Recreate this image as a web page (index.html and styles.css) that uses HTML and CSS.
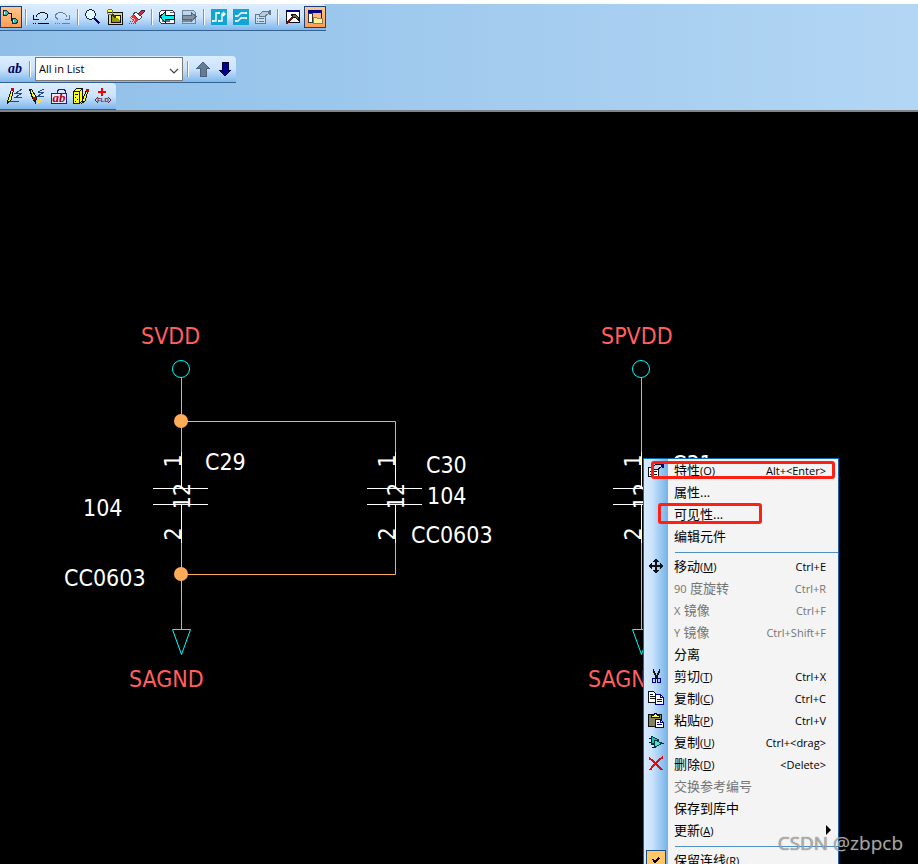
FILE: index.html
```html
<!DOCTYPE html>
<html lang="zh-CN">
<head>
    <meta charset="UTF-8" />
    <meta name="viewport" content="width=device-width, initial-scale=1.0">
    <title>Schematic Editor</title>
    <link rel="stylesheet" href="styles.css">
</head>
<body>
    <header class="toolbars">
        <div class="toolbar toolbar-main">
            <button type="button" class="tool active" aria-label="Add connection">
                <svg viewBox="0 0 16 16"><path d="M5 4.500h3.500v7h3" fill="none" stroke="#000"/><path d="M0 1h3l3 2v2l-3 2H0zM9 9h3l3 2v3l-3 1H9z" fill="#00383c"/><path d="M1 2h2l2 2-2 2H1zM10 10h2l2 2-2 2h-2z" fill="#3cb8b8"/><path d="M1 3h1v2H1zM10 11h1v2h-1z" fill="#fff"/></svg>
            </button>
            <span class="sep"></span>
            <button type="button" class="tool" aria-label="Undo">
                <svg viewBox="0 0 16 16"><path d="M.5 6v4.500h5M2.500 8.500Q5 3.500 9 3.500 15 4 15 7 15 9 12 10.500" fill="none" stroke="#111"/><path d="M0 14h1v1H0zM2 14h1v1H2zM5 14h11v1H5z" fill="#000"/></svg>
            </button>
            <button type="button" class="tool" aria-label="Redo">
                <svg viewBox="0 0 16 16"><path d="M14.500 6v4.500h-5M12.500 8.500Q10 3.500 6 3.500 .5 4 .5 7 .5 9 3 10.500" fill="none" stroke="#64809c"/><path d="M0 14h1v1H0zM2 14h1v1H2zM4 14h1v1H4zM7 14h8v1H7z" fill="#64809c"/></svg>
            </button>
            <span class="sep"></span>
            <button type="button" class="tool" aria-label="Zoom">
                <svg viewBox="0 0 16 16"><circle cx="5.500" cy="5.500" r="4.800" fill="#e4ffff" stroke="#123"/><path d="M3 5q1-2 3-2" fill="none" stroke="#fff"/><path d="M9.500 9.500l5 5" stroke="#000080" stroke-width="2.600"/></svg>
            </button>
            <button type="button" class="tool" aria-label="Board view">
                <svg viewBox="0 0 16 16"><path d="M1 3h15v13H1z" fill="#111"/><path d="M2 4h13v11H2z" fill="#d6d69a"/><path d="M4 6h10v8H4z" fill="#111"/><path d="M5 7h8v6H5z" fill="#98980a"/><path d="M7 7h6v4z" fill="#ffff40"/><path d="M5 5l4 4" stroke="#333" stroke-width="2"/><circle cx="3" cy="3" r="2.800" fill="#ff0" stroke="#775"/><path d="M1 3.500h4" stroke="#222"/></svg>
            </button>
            <button type="button" class="tool" aria-label="Redraw">
                <svg viewBox="0 0 16 16"><path d="M1 8l3-3 6 5-4 5z" fill="#e83440"/><path d="M4 5l3-2 6 5-3 3z" fill="#fff" stroke="#444"/><path d="M2 8l6 5M1 10l5 4" stroke="#ffc0c0" stroke-dasharray="1 1"/><path d="M9 5l4-4h2v2l-4 4" fill="#d03040" stroke="#422"/><path d="M0 14.500h8M1 12.500h5" stroke="#e02030" stroke-dasharray="1 1"/></svg>
            </button>
            <span class="sep"></span>
            <button type="button" class="tool" aria-label="Previous sheet">
                <svg viewBox="0 0 16 16"><path d="M2.500 1.500h11l2 2v11h-13l-2-2v-9z" fill="#fff" stroke="#334"/><path d="M3 13l1-2 1 2 1-2 1 2 1-2 1 2 1-2 1 2M11 3.500h4" stroke="#667" fill="none"/><path d="M1 7.500L6 3v3h9v4H6v3z" fill="#00f0f4" stroke="#012"/></svg>
            </button>
            <button type="button" class="tool" aria-label="Next sheet">
                <svg viewBox="0 0 16 16"><path d="M1.500 1.500h11l2 2v11h-13z" fill="#bdd6ec" stroke="#71869b"/><path d="M2 13l1-2 1 2 1-2 1 2 1-2 1 2 1-2 1 2" stroke="#71869b" fill="none"/><path d="M15 7.500L10 3v3H1v4h9v3z" fill="#8395a4" stroke="#536779"/></svg>
            </button>
            <span class="sep"></span>
            <button type="button" class="tool smooth" aria-label="Route">
                <svg viewBox="0 0 16 16"><path d="M0 0h16v16H0z" fill="#12a5d3"/><path d="M2 12h3V4h3M8 12h3V5h3M12 3l2 2-2 2" fill="none" stroke="#fff" stroke-width="1.400"/><path d="M1 11h2v2H1zM7 3h2v2H7zM7 11h2v2H7z" fill="#fff"/></svg>
            </button>
            <button type="button" class="tool smooth" aria-label="Differential pair">
                <svg viewBox="0 0 16 16"><path d="M0 0h16v16H0z" fill="#12a5d3"/><path d="M2 7h3l3-3h6M2 12h3l3-3h6" fill="none" stroke="#fff" stroke-width="1.400"/><path d="M2 6h2v2H2zM12 3h2v2h-2zM2 11h2v2H2zM12 8h2v2h-2z" fill="#fff"/></svg>
            </button>
            <button type="button" class="tool" aria-label="Properties">
                <svg viewBox="0 0 16 16"><path d="M.5 5.500h10v9H.5z" fill="#c8def2" stroke="#64788c"/><path d="M2 9.500h1M4 9.500h5M2 12.500h1M4 12.500h5" stroke="#64788c"/><path d="M4 6l4-4h5v3l-3 2H7L5 8z" fill="#b7cce0" stroke="#64788c"/><path d="M14 1h2v5h-2z" fill="#64788c"/></svg>
            </button>
            <span class="sep"></span>
            <button type="button" class="tool" aria-label="Tools">
                <svg viewBox="0 0 16 16"><path d="M1.500 1.500h13v12h-13z" fill="#fff" stroke="#111"/><path d="M1 1h14v2H1z" fill="#000080"/><path d="M1 15l8-8" stroke="#611" stroke-width="2"/><path d="M6 5h4l3 3v3l-2-2-3-1z" fill="#696a35" stroke="#111"/></svg>
            </button>
            <button type="button" class="tool active" aria-label="Project explorer">
                <svg viewBox="0 0 16 16"><path d="M1.500 1.500h13v12h-13z" fill="#ffb878" stroke="#000080"/><path d="M1 1h14v3H1z" fill="#000080"/><path d="M1.500 4.500h4v9h-4z" fill="#fff" stroke="#333"/><path d="M6.500 8.500h3l1 1h5v5h-9z" fill="#fff29b" stroke="#967a49"/></svg>
            </button>
        </div>

        <div class="toolbar toolbar-filter">
            <button type="button" class="tool text-tool">ab</button>
            <span class="sep"></span>
            <div class="select-wrap">
                <select id="listFilter" aria-label="Filter">
                    <option>All in List</option>
                </select>
                <svg class="chevron" viewBox="0 0 10 6"><path d="M1 1l4 4 4-4" fill="none" stroke="#444" stroke-width="1.200"/></svg>
            </div>
            <span class="sep"></span>
            <button type="button" class="tool" aria-label="Previous">
                <svg viewBox="0 0 16 16"><path d="M8 1l6 6h-3v8H5V7H2z" fill="#647d93" stroke="#4a6178"/></svg>
            </button>
            <button type="button" class="tool" aria-label="Next">
                <svg viewBox="0 0 16 16"><path d="M8 15L2 9h3V1h6v8h3z" fill="#000090" stroke="#000040"/></svg>
            </button>
        </div>

        <div class="toolbar toolbar-edit">
            <button type="button" class="tool" aria-label="Draw line">
                <svg viewBox="0 0 16 16"><path d="M15 1l-6 4h6l-6 4h6M3 13.500h9" fill="none" stroke="#224a80"/><path d="M.5 15l1-5 3-8h2L4 12z" fill="#ff0" stroke="#111"/><path d="M4 0h3v3H4z" fill="#d00000"/></svg>
            </button>
            <button type="button" class="tool" aria-label="Modify line">
                <svg viewBox="0 0 16 16"><path d="M15 1l-6 3h6l-6 4h6" fill="none" stroke="#224a80"/><path d="M.5 1h2l5 9-1 5-3-5z" fill="#ff0" stroke="#111"/><path d="M4 9h3v3H4z" fill="#d00000"/><path d="M10 11h4l-3 4-4 1z" fill="#ffe020"/></svg>
            </button>
            <button type="button" class="tool" aria-label="Attribute">
                <svg viewBox="0 0 16 16"><path d="M.5 5.500h15v10H.5z" fill="#e4e8ff" stroke="#202070"/><path d="M6.500 5V3l2-2h4l2 2v3" fill="none" stroke="#202070"/><text x="8" y="14" class="icon-ab">ab</text></svg>
            </button>
            <button type="button" class="tool" aria-label="Library">
                <svg viewBox="0 0 16 16"><path d="M.5 3.500l3-3h6v12l-3 3h-6z" fill="#ffff20" stroke="#111"/><path d="M.5 3.500h6v12M6.500 3.500l3-3M2 6.500h3M2 9.500h1M4 11.500h1M2 13.500h1" fill="none" stroke="#111"/><path d="M9 15l1-4 3-8h2l-3 10z" fill="#ff0" stroke="#111"/><path d="M13 1h3v3h-3z" fill="#d00000"/></svg>
            </button>
            <button type="button" class="tool" aria-label="Add field">
                <svg viewBox="0 0 16 16"><path d="M7 0v8M3 4h8" stroke="#f00000" stroke-width="2"/><path d="M3 9l-3 3 3 3M13 9l3 3-3 3" fill="none" stroke="#702020"/><text x="8" y="14" class="icon-fld">FLD</text></svg>
            </button>
        </div>
    </header>

    <main class="canvas">
        <svg class="schematic">
            <defs>
                <g id="power">
                    <circle cx="0" cy="257" r="8.500" class="pin" />
                    <path d="M.5 266v12" class="pin" />
                </g>
                <g id="ground">
                    <path d="M.5 493v24M-8.500 517.500h18l-9 25z" class="pin" />
                </g>
                <g id="capacitor">
                    <path d="M.5 340v36M-28 376.500h55M-28 392.500h55M.5 392v39" class="part" />
                    <text transform="translate(0 349) rotate(-90)" class="num">1</text>
                    <text transform="translate(9 384) rotate(-90)" class="num">12</text>
                    <text transform="translate(0 422) rotate(-90)" class="num">2</text>
                </g>
            </defs>

            <!-- wires -->
            <path class="wire" d="M181.500 278v62M181.500 431v62M181 309.500h214.500v30.500M395.500 431v31.500H181M641.500 278v62M641.500 431v62" />
            <circle class="junction" cx="181" cy="309" r="7" />
            <circle class="junction" cx="181" cy="462" r="7" />

            <!-- C29 / C30 -->
            <use href="#power" x="181" />
            <use href="#capacitor" x="181" />
            <use href="#capacitor" x="395" />
            <use href="#ground" x="181" />
            <text x="141" y="232" class="net">SVDD</text>
            <text x="129" y="575" class="net">SAGND</text>
            <text x="205" y="358">C29</text>
            <text x="83" y="404">104</text>
            <text x="64" y="474">CC0603</text>
            <text x="426" y="361">C30</text>
            <text x="427" y="392">104</text>
            <text x="411" y="431">CC0603</text>

            <!-- C31 -->
            <use href="#power" x="641" />
            <use href="#capacitor" x="641" />
            <use href="#ground" x="641" />
            <text x="601" y="232" class="net">SPVDD</text>
            <text x="588" y="575" class="net">SAGND</text>
            <text x="672" y="360">C31</text>
        </svg>

        <div class="context-menu">
            <button type="button" class="item">
                <svg viewBox="0 0 16 16"><path d="M.5 5.500h10v9H.5z" fill="#fff" stroke="#111"/><path d="M2 9.500h1M4 9.500h5M2 12.500h1M4 12.500h5" stroke="#111"/><path d="M4 6l4-4h5v3l-3 2H7L5 8z" fill="#c8d8e8" stroke="#111"/><path d="M14 1h2v5h-2z" fill="#000080"/></svg>
                <span class="label">特性<small>(<u>O</u>)</small></span><kbd>Alt+&lt;Enter&gt;</kbd>
            </button>
            <button type="button" class="item"><span class="label">属性...</span></button>
            <button type="button" class="item"><span class="label">可见性...</span></button>
            <button type="button" class="item"><span class="label">编辑元件</span></button>
            <hr>
            <button type="button" class="item">
                <svg viewBox="0 0 16 16"><path d="M8 1v14M1 8h14" stroke="#111" stroke-width="2"/><path d="M8 0l3 4H5zM8 16l3-4H5zM0 8l4-3v6zM16 8l-4-3v6z" fill="#111"/></svg>
                <span class="label">移动<small>(<u>M</u>)</small></span><kbd>Ctrl+E</kbd>
            </button>
            <button type="button" class="item" disabled><span class="label"><small>90</small> 度旋转</span><kbd>Ctrl+R</kbd></button>
            <button type="button" class="item" disabled><span class="label"><small>X</small> 镜像</span><kbd>Ctrl+F</kbd></button>
            <button type="button" class="item" disabled><span class="label"><small>Y</small> 镜像</span><kbd>Ctrl+Shift+F</kbd></button>
            <button type="button" class="item"><span class="label">分离</span></button>
            <button type="button" class="item">
                <svg viewBox="0 0 16 16"><path d="M5.500 1v2l4 8M11.500 1v2l-4 8" fill="none" stroke="#111" stroke-width="1.400"/><ellipse cx="6" cy="12.500" rx="1.700" ry="2.300" fill="none" stroke="#000080"/><ellipse cx="11" cy="12.500" rx="1.700" ry="2.300" fill="none" stroke="#000080"/></svg>
                <span class="label">剪切<small>(<u>T</u>)</small></span><kbd>Ctrl+X</kbd>
            </button>
            <button type="button" class="item">
                <svg viewBox="0 0 16 16"><path d="M.5 1.500h5l3 3v8h-8z" fill="#fff" stroke="#111"/><path d="M2 4.500h3M2 6.500h5M2 8.500h5" stroke="#111"/><path d="M7.500 4.500h5l3 3v7h-8z" fill="#fff" stroke="#000080"/><path d="M12.500 4v3.500h3M9 9.500h5M9 11.500h5" fill="none" stroke="#000080"/></svg>
                <span class="label">复制<small>(<u>C</u>)</small></span><kbd>Ctrl+C</kbd>
            </button>
            <button type="button" class="item">
                <svg viewBox="0 0 16 16"><path d="M.5 2.500h13v12H.5z" fill="#84845a" stroke="#111"/><path d="M3.500 5.500v-2h2l1-2h2l1 2h2v2z" fill="#ffff60" stroke="#111"/><path d="M7.500 7.500h5l3 3v5h-8z" fill="#fff" stroke="#000080"/><path d="M12.500 7v3.500h3M9 10.500h2M9 12.500h5" fill="none" stroke="#000080"/></svg>
                <span class="label">粘贴<small>(<u>P</u>)</small></span><kbd>Ctrl+V</kbd>
            </button>
            <button type="button" class="item">
                <svg viewBox="0 0 16 16"><path d="M1 4.500h4M1 8.500h4M4 10.500h3M4 13.500h3M12 9.500h4" stroke="#111"/><path d="M3 2l8 4-8 5z" fill="#20b8b8" stroke="#013a3a"/><path d="M6 6l8 3-8 5z" fill="#58ddd4" stroke="#013a3a"/></svg>
                <span class="label">复制<small>(<u>U</u>)</small></span><kbd>Ctrl+&lt;drag&gt;</kbd>
            </button>
            <button type="button" class="item">
                <svg viewBox="0 0 16 16"><path d="M1 2q6 4 13 12M15 1Q7 6 2 14" fill="none" stroke="#e00c0c" stroke-width="2"/></svg>
                <span class="label">删除<small>(<u>D</u>)</small></span><kbd>&lt;Delete&gt;</kbd>
            </button>
            <button type="button" class="item" disabled><span class="label">交换参考编号</span></button>
            <button type="button" class="item"><span class="label">保存到库中</span></button>
            <button type="button" class="item submenu"><span class="label">更新<small>(<u>A</u>)</small></span></button>
            <hr>
            <button type="button" class="item checked">
                <svg viewBox="0 0 16 16"><path d="M5 7l2 3 4-4" fill="none" stroke="#000" stroke-width="1.500"/></svg>
                <span class="label">保留连线<small>(<u>R</u>)</small></span>
            </button>
            <span class="mark mark-properties"></span>
            <span class="mark mark-visibility"></span>
        </div>

        <div class="watermark">CSDN @zbpcb</div>
    </main>
</body>
</html>
```
FILE: styles.css
```css
* {
    box-sizing: border-box;
}

body {
    margin: 0;
    padding-top: 4px;
    height: 100vh;
    overflow: hidden;
    display: flex;
    flex-direction: column;
    background-color: #fff;
    font-family: "Open Sans", "Noto Sans CJK SC", sans-serif;
    font-size: 11px;
    color: #000;
}

button {
    font: inherit;
    color: inherit;
    border: none;
    background: none;
    padding: 0;
}

/* Toolbars */
.toolbars {
    display: flex;
    flex-direction: column;
    align-items: flex-start;
    background: linear-gradient(to right, #8fbfe8, #b3d6f4);
    border-bottom: 2px solid #808488;
}

.toolbar {
    display: flex;
    align-items: center;
    height: 27px;
    background: linear-gradient(to bottom, #dcedff, #cbe3fc 50%, #7db7ec);
    border-bottom: 1px solid #35628f;
    border-radius: 0 4px 0 0;
}

.toolbar-main {
    margin-bottom: 25px;
}

.toolbar-filter {
    padding-left: 4px;
}

.toolbar-edit {
    padding: 0 2px 0 4px;
}

.tool {
    display: flex;
    align-items: center;
    justify-content: center;
    width: 22px;
    height: 22px;
}

.tool svg {
    width: 16px;
    height: 16px;
    shape-rendering: crispEdges;
}

.smooth svg {
    shape-rendering: auto;
}

.tool.active {
    border: 1px solid #1c3f75;
    background: linear-gradient(to bottom, #ffc78c, #ff9d55);
}

.text-tool {
    font-family: "Liberation Serif", serif;
    font-size: 14px;
    font-weight: bold;
    font-style: italic;
    color: #000060;
}

.icon-ab {
    font: italic bold 13px "Liberation Serif", serif;
    fill: #b00010;
    text-anchor: middle;
}

.icon-fld {
    font: bold 6px "Liberation Sans", sans-serif;
    fill: #702020;
    text-anchor: middle;
}

.sep {
    width: 2px;
    height: 16px;
    margin: 0 3px;
    background-color: #6a9cca;
    border-right: 1px solid #fff;
}

.select-wrap {
    position: relative;
    margin: 0 1px;
}

select {
    display: block;
    appearance: none;
    width: 148px;
    height: 24px;
    padding: 0 20px 2px 3px;
    border: 1px solid #7a7a7a;
    border-radius: 0;
    background-color: #fff;
    color: #000;
    font: inherit;
}

.chevron {
    position: absolute;
    right: 4px;
    top: 11px;
    width: 10px;
    height: 6px;
    pointer-events: none;
}

/* Drawing area */
.canvas {
    position: relative;
    flex: 1;
    min-height: 0;
    overflow: hidden;
    background-color: #000;
}

.schematic {
    display: block;
    width: 100%;
    height: 100%;
    font-family: "DejaVu Sans Condensed", "Noto Sans", sans-serif;
    font-size: 23px;
    fill: #fff;
}

.wire,
.pin,
.part {
    fill: none;
    stroke-width: 1;
}

.wire {
    stroke: #ffab57;
}

.pin {
    stroke: #00ffff;
}

.part {
    stroke: #fff;
}

.junction {
    fill: #ffab57;
}

.net {
    fill: #ff5f5f;
}

.num {
    text-anchor: middle;
}

/* Context menu */
.context-menu {
    position: absolute;
    left: 643px;
    top: 346px;
    width: 196px;
    padding-bottom: 2px;
    border: 1px solid #0a68b4;
    background: linear-gradient(to right, #d6eaff, #cbe3fc 8px, #74b2ea 24px, #f4f4f4 24px);
}

.item {
    display: grid;
    grid-template-columns: 24px 1fr auto;
    align-items: center;
    width: 100%;
    height: 22px;
    padding-right: 12px;
    text-align: left;
    white-space: nowrap;
}

.item:disabled {
    color: #747474;
}

.item svg {
    grid-column: 1;
    width: 16px;
    height: 16px;
    margin-left: 4px;
    shape-rendering: crispEdges;
}

.label {
    grid-column: 2;
    padding-left: 6px;
    font-size: 13px;
    line-height: 20px;
}

.label small {
    font-size: 11px;
}

.label u {
    text-underline-offset: 1px;
}

kbd {
    font: inherit;
}

hr {
    height: 1px;
    margin: 5px 0 2px 31px;
    border: none;
    background-color: #5090c4;
}

.submenu::after {
    content: "";
    margin-right: -8px;
    border: 5px solid transparent;
    border-left-color: #000;
    border-right-width: 0;
}

.checked svg {
    width: 20px;
    height: 20px;
    margin-left: 2px;
    border: 1px solid #1c4f82;
    background-color: #ffc766;
}

.mark {
    position: absolute;
    border: 3px solid #ff2015;
    border-radius: 3px;
}

.mark-properties {
    left: 7px;
    top: 2px;
    width: 184px;
    height: 18px;
}

.mark-visibility {
    left: 14px;
    top: 44px;
    width: 104px;
    height: 21px;
}

.watermark {
    position: absolute;
    right: 15px;
    bottom: 6px;
    font-size: 19px;
    line-height: 30px;
    color: rgba(190, 190, 190, 0.8);
    text-shadow: 0 0 1px #555;
}
```
